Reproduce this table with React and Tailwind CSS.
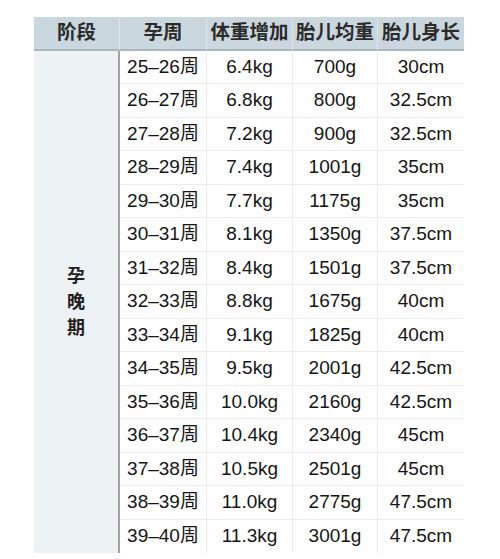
import React from "react";

const rows = [
  ["25–26周", "6.4kg", "700g", "30cm"],
  ["26–27周", "6.8kg", "800g", "32.5cm"],
  ["27–28周", "7.2kg", "900g", "32.5cm"],
  ["28–29周", "7.4kg", "1001g", "35cm"],
  ["29–30周", "7.7kg", "1175g", "35cm"],
  ["30–31周", "8.1kg", "1350g", "37.5cm"],
  ["31–32周", "8.4kg", "1501g", "37.5cm"],
  ["32–33周", "8.8kg", "1675g", "40cm"],
  ["33–34周", "9.1kg", "1825g", "40cm"],
  ["34–35周", "9.5kg", "2001g", "42.5cm"],
  ["35–36周", "10.0kg", "2160g", "42.5cm"],
  ["36–37周", "10.4kg", "2340g", "45cm"],
  ["37–38周", "10.5kg", "2501g", "45cm"],
  ["38–39周", "11.0kg", "2775g", "47.5cm"],
  ["39–40周", "11.3kg", "3001g", "47.5cm"],
];

const headers = ["阶段", "孕周", "体重增加", "胎儿均重", "胎儿身长"];

export default function App() {
  return (
    <div
      className="w-[500px] h-[559px] bg-white pt-[17px] pl-[34px] overflow-hidden"
      style={{ fontFamily: '"Liberation Sans", "Noto Sans CJK SC", sans-serif' }}
    >
      <div className="grid grid-cols-[86px_87px_86px_85px_86px] grid-rows-[34px_repeat(15,minmax(0,1fr))] w-[430px] h-[536px]">
        {headers.map((h, i) => (
          <div
            key={h}
            className={
              "flex items-center justify-center bg-[#cbd7df] border-b-2 border-[#aab6bd] text-[19.5px] font-bold text-[#2b2b2b] " +
              (i < 4 ? "border-r border-r-[#dde5ea]" : "")
            }
          >
            {h}
          </div>
        ))}

        {/* left stage column */}
        <div className="row-span-15 flex flex-col items-center justify-center bg-[#edf2f5] border-r-2 border-r-[#a3a3a3] text-[18px] font-bold text-[#1f1f1f] leading-[26px]">
          <span>孕</span>
          <span>晚</span>
          <span>期</span>
        </div>

        {rows.map((r, ri) =>
          r.map((cell, ci) => {
            const last = ri === rows.length - 1;
            return (
              <div
                key={ri + "-" + ci}
                className={
                  "flex items-center justify-center text-[19px] text-[#151515] " +
                  (last ? "" : "border-b border-[#ececec] ") +
                  (ci < 3 ? "border-r border-r-[#ececec]" : "")
                }
              >
                {last && ci === 3 ? (
                  <span className="h-[18px] overflow-hidden leading-[22px] mt-[-4px]">
                    {cell}
                  </span>
                ) : (
                  cell
                )}
              </div>
            );
          })
        )}
      </div>
    </div>
  );
}
